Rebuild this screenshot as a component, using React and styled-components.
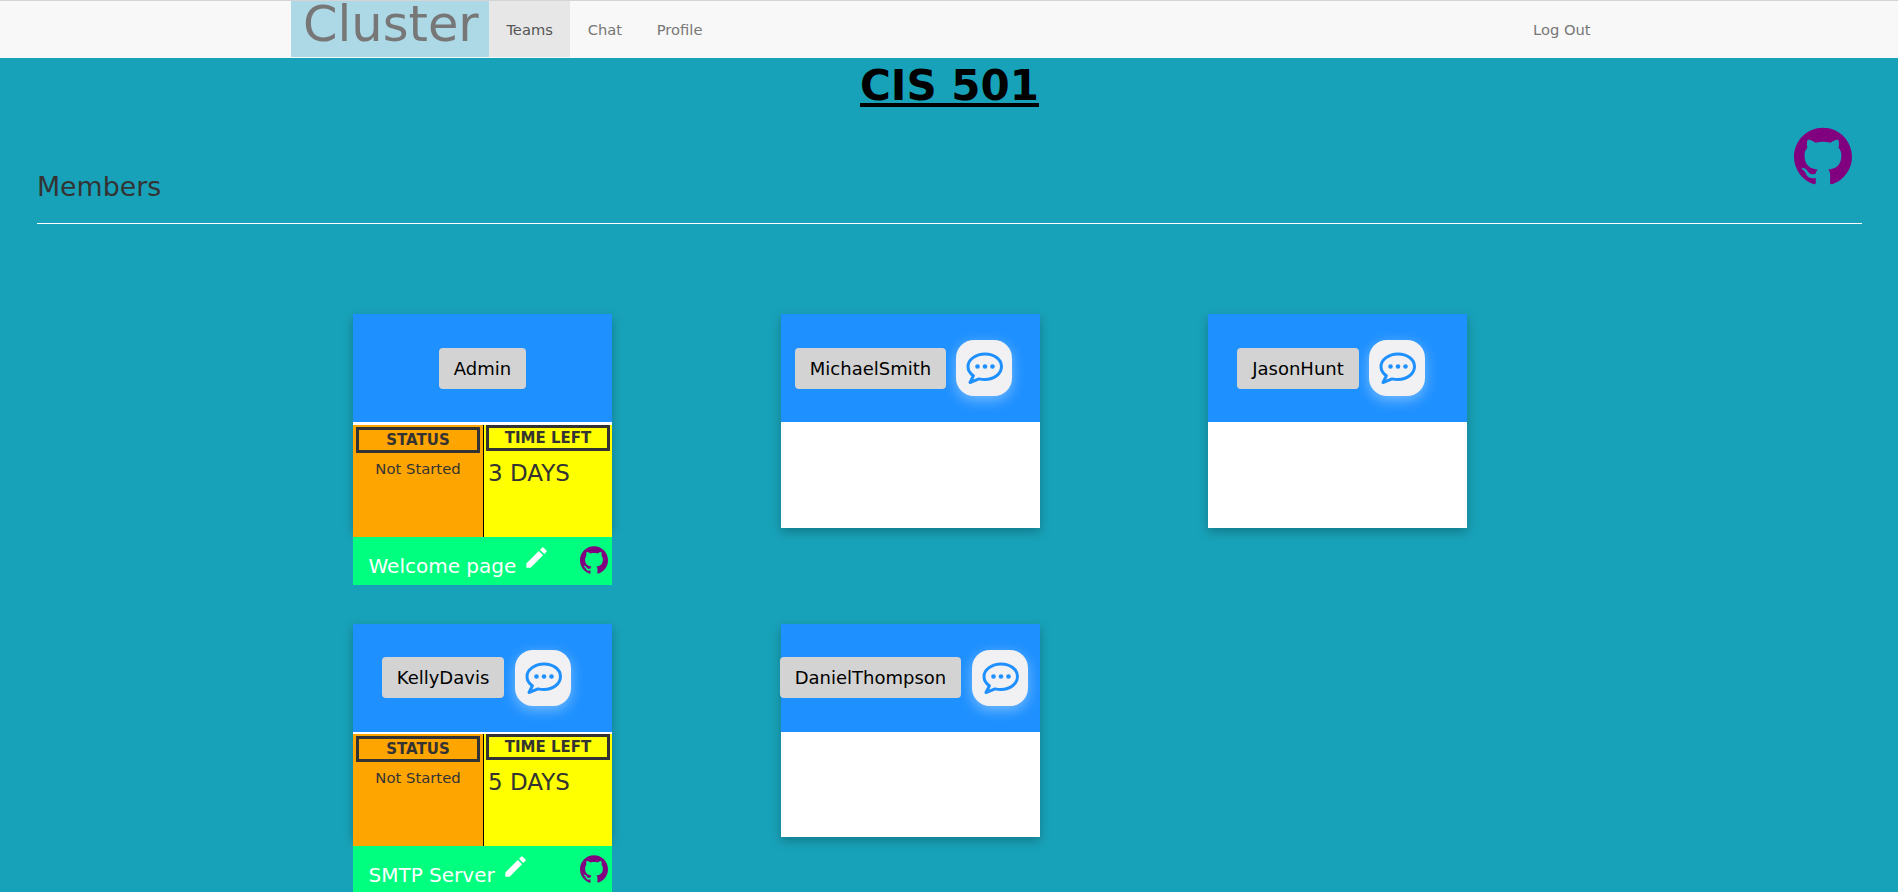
import React from 'react';
import styled, { createGlobalStyle } from 'styled-components';
import { SiGithub } from 'react-icons/si';
import { MdEdit } from 'react-icons/md';

const Global = createGlobalStyle`
  html, body { margin: 0; padding: 0; height: 892px; overflow: hidden; }
  body { background: #18a2b9; font-family: "DejaVu Sans", Verdana, sans-serif; color: #333; }
  * { box-sizing: border-box; }
`;

const Navbar = styled.nav`
  height: 58px;
  background: #f8f8f8;
  border-top: 1px solid #d4d4d4;
  padding-left: 291px;
  padding-right: 290px;
  display: flex;
  align-items: stretch;
`;
const Brand = styled.a`
  width: 198px;
  height: 56px;
  background: lightblue;
  color: #777;
  font-size: 49.5px;
  line-height: 46px;
  padding-left: 12px;
`;
const NavItem = styled.a`
  height: 56px;
  padding: 0 17.4px;
  display: flex;
  align-items: center;
  font-size: 14.7px;
  color: ${p => (p.$active ? '#555' : '#777')};
  background: ${p => (p.$active ? '#e7e7e7' : 'transparent')};
  margin-left: ${p => (p.$push ? 'auto' : '0')};
`;
const Title = styled.h1`
  margin: 0;
  padding: 4px 0 0 1px;
  text-align: center;
  color: #000;
  font-size: 42px;
  line-height: 48px;
  font-weight: 700;
  text-decoration: underline;
`;
const Section = styled.section`
  padding: 0 36px 0 37px;
`;
const SectionHead = styled.div`
  height: 114px;
  display: flex;
  justify-content: space-between;
  align-items: flex-end;
  border-bottom: 1px solid #fff;
`;
const SectionTitle = styled.h3`
  margin: 0 0 20px;
  font-size: 26.8px;
  line-height: 32px;
  font-weight: 400;
  color: #333;
`;
const BigGit = styled.a`
  color: purple;
  font-size: 58px;
  line-height: 0;
  margin: 0 10px 38px 0;
`;
const Grid = styled.div`
  padding: 90.4px 0 0 353px;
  display: grid;
  grid-template-columns: repeat(3, 427.5px);
  grid-auto-rows: 309.2px;
  align-items: start;
`;
const Card = styled.article`
  width: 259px;
  height: 213.5px;
  background: #fff;
  box-shadow: 0 4px 10px rgba(0, 0, 0, 0.25);
`;
const CardHead = styled.header`
  height: 108px;
  background: dodgerblue;
  display: flex;
  align-items: flex-start;
  justify-content: center;
  gap: 10.5px;
  padding-top: 26px;
`;
const NameButton = styled.button`
  height: 41px;
  margin-top: 7.5px;
  padding: 0 14.8px;
  border: 0;
  border-radius: 4px;
  background: lightgray;
  color: #000;
  font: 400 18px "DejaVu Sans", Verdana, sans-serif;
  white-space: nowrap;
  flex-shrink: 0;
`;
const ChatButton = styled.button`
  width: 56px;
  height: 56px;
  margin-right: 12.500px;
  border: 0;
  padding: 0;
  border-radius: 18px;
  background: #f1f1f3;
  box-shadow: 0 4px 14px rgba(255, 255, 255, 0.4);
  display: flex;
  align-items: center;
  justify-content: center;
  flex-shrink: 0;
`;
const Task = styled.div`
  margin-top: 2.5px;
  position: relative;
`;
const Panels = styled.div`
  height: 112px;
  display: flex;
`;
const StatusPanel = styled.div`
  width: 131px;
  background: orange;
  border-right: 1px solid #000;
  padding: 2px 3px 0;
  text-align: center;
`;
const TimePanel = styled.div`
  width: 128px;
  background: yellow;
  padding: 0 2px 0;
`;
const PanelLabel = styled.div`
  height: 26px;
  border: 3px solid #333;
  font-size: 15px;
  font-weight: 700;
  line-height: 21px;
  text-align: center;
  color: #333;
  white-space: nowrap;
`;
const StatusText = styled.div`
  font-size: 14.8px;
  line-height: 20px;
  margin-top: 6px;
  color: #333;
`;
const TimeText = styled.div`
  font-size: 23px;
  line-height: 28px;
  margin-top: 8px;
  padding-left: 2px;
  color: #333;
`;
const TaskFooter = styled.footer`
  height: 48px;
  background: springgreen;
  display: flex;
  align-items: flex-start;
  padding: 0 4px 0 15.5px;
  color: #fff;
`;
const TaskName = styled.span`
  font-size: 20px;
  line-height: 24px;
  margin-top: 17px;
  white-space: nowrap;
`;
const EditIcon = styled.span`
  font-size: 27px;
  line-height: 0;
  margin: 7px 0 0 7px;
`;
const SmallGit = styled.a`
  color: purple;
  font-size: 28px;
  line-height: 0;
  margin: 9px 0 0 auto;
`;

const ChatIcon = () => (
  <svg width="38" height="34" viewBox="0 0 38 34" fill="none">
    <path
      d="M20 3C11 3 3 8.5 3 15.5c0 3.8 2.1 7 5.4 9.3L5 31.5l9-3.6c1.900.4 3.900.6 6 .6 9 0 16.500-5.800 16.500-13S29 3 20 3z"
      stroke="#1e90ff"
      strokeWidth="3"
      strokeLinejoin="round"
    />
    <circle cx="12.500" cy="15.500" r="2.300" fill="#1e90ff" />
    <circle cx="20" cy="15.500" r="2.300" fill="#1e90ff" />
    <circle cx="27.500" cy="15.500" r="2.300" fill="#1e90ff" />
  </svg>
);

const members = [
  { name: 'Admin', self: true, task: { title: 'Welcome page', time: '3 DAYS' } },
  { name: 'MichaelSmith' },
  { name: 'JasonHunt' },
  { name: 'KellyDavis', task: { title: 'SMTP Server', time: '5 DAYS' } },
  { name: 'DanielThompson' },
];

export default function App() {
  return (
    <>
      <Global />
      <Navbar>
        <Brand>Cluster</Brand>
        <NavItem $active>Teams</NavItem>
        <NavItem>Chat</NavItem>
        <NavItem>Profile</NavItem>
        <NavItem $push>Log Out</NavItem>
      </Navbar>
      <Title>CIS 501</Title>
      <Section>
        <SectionHead>
          <SectionTitle>Members</SectionTitle>
          <BigGit><SiGithub /></BigGit>
        </SectionHead>
      </Section>
      <Grid>
        {members.map(m => (
          <Card key={m.name}>
            <CardHead>
              <NameButton>{m.name}</NameButton>
              {!m.self && <ChatButton><ChatIcon /></ChatButton>}
            </CardHead>
            {m.task && (
              <Task>
                <Panels>
                  <StatusPanel>
                    <PanelLabel>STATUS</PanelLabel>
                    <StatusText>Not Started</StatusText>
                  </StatusPanel>
                  <TimePanel>
                    <PanelLabel>TIME LEFT</PanelLabel>
                    <TimeText>{m.task.time}</TimeText>
                  </TimePanel>
                </Panels>
                <TaskFooter>
                  <TaskName>{m.task.title}</TaskName>
                  <EditIcon><MdEdit /></EditIcon>
                  <SmallGit><SiGithub /></SmallGit>
                </TaskFooter>
              </Task>
            )}
          </Card>
        ))}
      </Grid>
    </>
  );
}
